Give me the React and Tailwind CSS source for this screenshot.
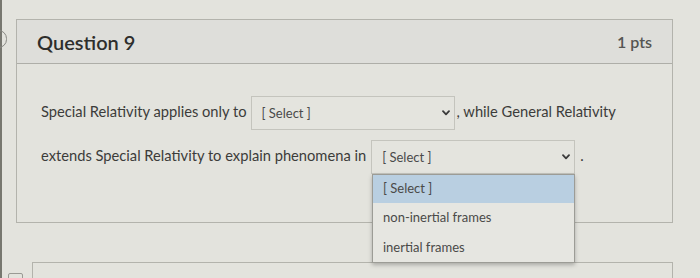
import React from "react";

const font = { fontFamily: "Lato, 'Open Sans', sans-serif" };

function Chevron() {
  return (
    <svg width="8" height="6" viewBox="0 0 8 6" className="shrink-0">
      <path d="M1 1.2 L4 4.4 L7 1.2" fill="none" stroke="#3b3b3b" strokeWidth="1.8" strokeLinecap="round" strokeLinejoin="round" />
    </svg>
  );
}

function SelectBox({ className = "" }) {
  return (
    <span
      className={`inline-flex items-center justify-between align-middle w-[204px] h-[34px] border border-[#c4c4bd] bg-[#e4e4de] pl-[10px] pr-[4px] text-[13px] text-[#4a4a4a] leading-none ${className}`}
    >
      <span>[ Select ]</span>
      <Chevron />
    </span>
  );
}

export default function App() {
  return (
    <div className="relative w-[700px] h-[278px] overflow-hidden bg-[#e3e3dd] text-[#3a3a38]" style={font}>
      {/* left edge of the screen */}
      <div className="absolute left-0 top-0 h-full w-[2px] bg-[#77776f]" />
      <div className="absolute left-[-10px] top-[30px] w-[17px] h-[18px] rounded-full border border-[#8a8a84]" />

      <div className="pl-[16px] pt-[19px] pr-[27px]">
        <div className="relative border border-[#b3b3ac]">
          <div className="flex items-center justify-between h-[44px] px-[20px] bg-[#dededa] border-b border-[#aeaea8]">
            <span className="text-[20px] font-semibold text-[#2e2e2c]">Question 9</span>
            <span className="text-[16px] font-semibold text-[#555552]">1 pts</span>
          </div>

          <div className="h-[158px] pt-[25px] pl-[24px] text-[14.7px] leading-[44px] text-[#3c3c3a]">
            <p>
              Special Relativity applies only to
              <SelectBox className="ml-[4px] mr-[2px]" />
              , while General Relativity
              <br />
              extends Special Relativity to explain phenomena in
              <SelectBox className="ml-[5px] mr-[5px]" />.
            </p>
          </div>

          {/* open dropdown */}
          <div className="absolute left-[355px] top-[154px] w-[203px] border border-[#9c9c96] bg-[#e6e6e1] shadow-[0_2px_4px_rgba(0,0,0,0.25)] text-[13px] text-[#4a4a48]">
            <div className="h-[28px] flex items-center pl-[10px] bg-[#b9cfe1]">[ Select ]</div>
            <div className="h-[30px] flex items-center pl-[10px]">non-inertial frames</div>
            <div className="h-[29px] flex items-center pl-[10px]">inertial frames</div>
          </div>
        </div>

        <div className="mt-[39px] ml-[16px] h-[30px] border-t border-l border-r border-[#b3b3ac]" />
      </div>

      <div className="absolute left-[8px] top-[273px] w-[15px] h-[10px] rounded-[2px] border border-[#9a9a94]" />
    </div>
  );
}
